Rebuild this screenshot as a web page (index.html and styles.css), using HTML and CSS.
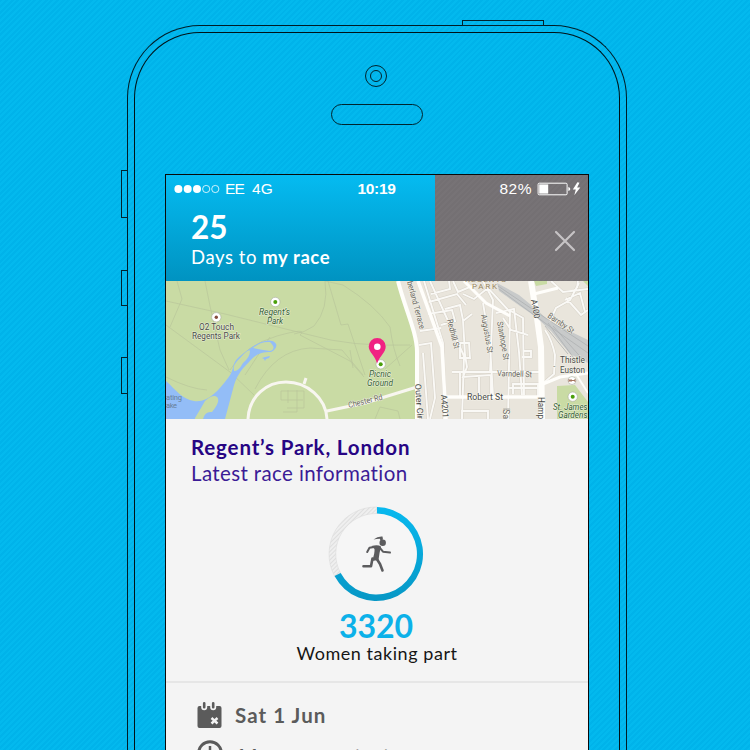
FILE: index.html
```html
<!DOCTYPE html>
<html lang="en">
<head>
<meta charset="utf-8">
<title>Race day</title>
<link rel="stylesheet" href="styles.css">
</head>
<body>
<main class="phone">
  <i class="key key-power"></i><i class="key key-mute"></i><i class="key key-up"></i><i class="key key-down"></i>
  <div class="bezel">
    <div class="camera"><i></i></div>
    <div class="speaker"></div>
    <div class="screen">
      <header class="header">
        <div class="status">
          <div class="carrier">
            <svg class="signal" width="46" height="10" viewBox="0 0 46 10"><g fill="#fff"><circle cx="4.4" cy="5" r="4"/><circle cx="13.7" cy="5" r="4"/><circle cx="23" cy="5" r="4"/></g><g fill="none" stroke="#fff" stroke-width=".8"><circle cx="32.2" cy="5" r="3.6"/><circle cx="41.3" cy="5" r="3.6"/></g></svg>
            <span class="operator">EE</span><span>4G</span>
          </div>
          <div class="time">10:19</div>
          <div class="power"><span>82%</span>
            <svg width="44" height="16" viewBox="0 0 44 16"><rect x="1.1" y="2.2" width="29" height="11.6" rx="1.2" fill="none" stroke="#fff" stroke-width="1"/><path d="M2.2 3.4h9v9.2h-9z" fill="#fff"/><path d="M31.3 5.9q2 .4 2 2.1t-2 2.1z" fill="#fff"/><path d="M40.4 1.3 35.8 8.4h3L37.3 14.3 43.3 6.5h-3.2L42.5 1.8z" fill="#fff"/></svg>
          </div>
        </div>
        <div class="countdown"><strong class="days">25</strong><span class="caption">Days to <b>my race</b></span></div>
        <div class="close"><svg width="22" height="22" viewBox="0 0 22 22"><path d="M2 2 20 20M20 2 2 20" stroke="#c6c3c5" stroke-width="2.2" stroke-linecap="round"/></svg></div>
      </header>

      <svg class="map" viewBox="166 281 422 138">
        <rect x="166" y="281" width="422" height="138" fill="#c9dba4"/>
        <g class="trail">
          <path d="M166 301 225 314 310 335Q350 347 410 345M166 325 230 372 254 395M177 281 182 299 170 327M205 281 210 306 220 350 229 370M230 370Q245 345 277 336T300 335L350 361 364 377M325 281Q329 309 314 326 304 333 294 334M328 281 341 325 348 324 365 375M325 281 343 285Q375 305 390 327 393 350 400 366M412 345 385 369M245 375 270 337M166 377Q190 389 207 390M255 389Q275 350 310 348L342 350 363 375M350 350 353 368M375 419 380 407 398 411 400 419"/>
          <path d="M281 391h23v17h-17M281 391v9h22M288 390v13M297 390v22h-14"/>
        </g>
        <path fill="#93bdf7" d="M166 381C176 390 182 399 194 401 208 403 218 391 228 378 235 370 231 364 239 357 249 349 258 341 269 340.500 279 341 278 349 271 352 261 352 256 354 249 362 240 371 236 377 233 389L225 419H166z"/>
        <g fill="#c9dba4"><path d="M195 418 201 408 205 401Q213 394 217 397 221 401 212 412 205 411 203 419H195z"/><path d="M234 371Q232 365 241 357 249 348 250 351 250 357 243 363 238 372 234 371z"/><path d="M253 348Q261 341 270 342 277 349 270 351 261 350 253 348z"/></g>
        <path fill="#93bdf7" d="m262 358 3-1 5-1-1 2-3 1-1 2-1-2z"/>
        <g fill="none" stroke="#f8f6f0"><path stroke-width="3" d="M248 419C249 396 267 382 286 382 307 382 326 398 327 419M304 384 306 378M327 411 365 403 417 387"/></g>
        <path fill="#e9e5dc" d="M399 281 418 348 418 387 417 419H588V281z"/>
        <path fill="#c9dba4" d="M534 281h13v3l-11 2zM557 386l18-1 13 17v17h-31zM583 281h5v5z"/>
        <g class="street-edge"><path id="streets" d="M424 281 443 343 445 419M430 281 464 356 462 419M431 294 450 289 449 281M429 302 457 294 466 305M428 314 452 310 455 321 441 325M453 281 458 292 477 284M420 331 441 328M419 345 431 343 435 398 430 419M423 353 428 419M463 294 474 299 488 288 510 312 508 419M445 309 460 305 463 320 465 355 467 367 463 377 491 375 491 394M469 343h-9v15h10zM472 314 463 321M483 281 493 300 490 372M493 372H461M483 303 490 345 493 395M496 313 514 309 519 352 522 395M509 310 523 318 524 395M503 318 511 330 528 335M524 351h7v6h-9M492 372H540M540 388H508M513 394V384h25v13M444 397h98M479 397v-21M460 397v-25h-8M462 419v-8h26v8M445 405 444 419M545 330Q552 340 555 355L554 374 541 385M548 325 556 308 570 300 579 283M566 298 581 315 588 310M565 300 580 293 585 312M551 281 563 292 588 289M578 281 577 288"/></g>
        <use href="#streets" class="street"/>
        <g class="road">
          <path d="M398 281C405 309 417 332 417 352L417 419"/><path d="M418 281 442 347 446 419M444 397H543" stroke-width="3.500"/><path d="M531 281 537 318 541 347 542 419" stroke-width="6"/><path d="M464 281 486 303 510 316M543 384 560 377 588 373M534 294 558 288" stroke-width="3"/><path d="M576 374 588 393" stroke-width="2"/>
        </g>
        <path fill="#c8caca" d="M497 283 519 295 536 309 549 321 588 340V363L570 354 551 331 536 317 520 306 499 291z"/>
        <path d="M498 286 541 315 588 346M499 289 545 323 588 353M545 326 568 354M548 323 576 361M553 326 585 362" fill="none" stroke="#aeb1b3" stroke-width=".8"/>

        <g class="place"><circle cx="216.300" cy="317.300" r="4.700"/><circle cx="275.300" cy="302" r="4.700"/><circle cx="380.700" cy="364.300" r="4.700"/><circle cx="572.700" cy="396.700" r="4.700"/><circle cx="572" cy="380.500" r="4"/></g>
        <circle cx="216.300" cy="317.300" r="1.700" fill="#854c3c"/><g fill="#4ba00c"><circle cx="275.300" cy="302" r="2"/><circle cx="380.700" cy="364.300" r="2"/><circle cx="572.700" cy="396.700" r="2"/></g><path d="M569 379v3m2-3v3m4-3v3M569 380.500h6" stroke="#a77660" fill="none"/>
        <g class="label">
          <text x="199" y="330.300" textLength="35" lengthAdjust="spacingAndGlyphs">O2 Touch</text><text x="192" y="339.300" textLength="48" lengthAdjust="spacingAndGlyphs">Regents Park</text>
          <text x="560" y="362.800" textLength="25" lengthAdjust="spacingAndGlyphs">Thistle</text><text x="560" y="372.500" textLength="25" lengthAdjust="spacingAndGlyphs">Euston</text><text x="553" y="369" font-size="4">™</text>
          <text x="467" y="400.300" textLength="36" lengthAdjust="spacingAndGlyphs">Robert St</text>
          <text transform="translate(415 384) rotate(86)" textLength="35" lengthAdjust="spacingAndGlyphs">Outer Cir</text>
          <text transform="translate(441 395) rotate(86)" textLength="23" lengthAdjust="spacingAndGlyphs">A4201</text>
          <text transform="translate(531 300) rotate(80)" textLength="19" lengthAdjust="spacingAndGlyphs">A400</text>
          <text transform="translate(538 397) rotate(90)" textLength="22" lengthAdjust="spacingAndGlyphs">Hamp</text>
        </g>
        <g class="label park"><text x="259" y="315" textLength="31" lengthAdjust="spacingAndGlyphs">Regent’s</text><text x="267" y="324" textLength="16" lengthAdjust="spacingAndGlyphs">Park</text><text x="369" y="377.300" textLength="22" lengthAdjust="spacingAndGlyphs">Picnic</text><text x="367" y="386.300" textLength="26" lengthAdjust="spacingAndGlyphs">Ground</text><text x="553" y="409.500" textLength="34.500" lengthAdjust="spacingAndGlyphs">St. James</text><text x="558" y="418.300" textLength="29.500" lengthAdjust="spacingAndGlyphs">Gardens</text></g>
        <g class="label minor">
          <text transform="translate(349 408) rotate(-14)" textLength="35" lengthAdjust="spacingAndGlyphs">Chester Rd</text>
          <text transform="translate(407 282) rotate(75)" textLength="49" lengthAdjust="spacingAndGlyphs">berland Terrace</text>
          <text transform="translate(447 320) rotate(76)" textLength="30" lengthAdjust="spacingAndGlyphs">Redhill St</text>
          <text transform="translate(481 315) rotate(80)" textLength="39" lengthAdjust="spacingAndGlyphs">Augustus St</text>
          <text transform="translate(497 322) rotate(80)" textLength="39" lengthAdjust="spacingAndGlyphs">Stanhope St</text>
          <text x="497" y="376" transform="rotate(2 497 376)" textLength="35" lengthAdjust="spacingAndGlyphs">Varndell St</text>
          <text transform="translate(547 317) rotate(34)" textLength="30" lengthAdjust="spacingAndGlyphs">Barnby St</text>
          <text transform="translate(503 408) rotate(90)" textLength="11">IS a</text>
          <text x="166" y="400.300" textLength="16" class="water">ating</text><text x="166" y="408.300" textLength="11" class="water">ake</text>
        </g>
        <g class="district"><text x="465" y="281.500" textLength="41">REGENTS</text><text x="472" y="289" textLength="25">PARK</text></g>
        <path d="M377 363.500C375.500 356 368.700 352.500 368.700 346.600A8.500 8.500 0 0 1 385.700 346.600C385.700 352.500 380.500 355 377 363.500z" fill="#f02382"/><circle cx="377.300" cy="346.700" r="3.300" fill="#fff"/>
      </svg>

      <section class="info">
        <h1>Regent’s Park, London</h1>
        <p class="latest">Latest race information</p>
        <div class="entrants">
          <svg class="ring" width="96" height="96" viewBox="0 0 96 96">
            <defs><linearGradient id="ringFill" x1="0" y1="0" x2="0" y2="1"><stop offset="0" stop-color="#08b9ef"/><stop offset="1" stop-color="#0797c5"/></linearGradient>
            <pattern id="hatch" width="3" height="3" patternUnits="userSpaceOnUse" patternTransform="rotate(45)"><path d="M0 0h3v3H0z" fill="#efefef"/><path d="M0 0h1v3H0z" fill="#dedede"/></pattern></defs>
            <circle cx="48" cy="48" r="40.500" fill="#f6f6f6"/>
            <path fill="url(#hatch)" stroke="#dcdcdc" stroke-width=".6" d="M49 1A47 47 0 0 0 6.500 70L12.500 67A40.500 40.500 0 0 1 49 7.500z"/>
            <path fill="url(#ringFill)" d="M49 1A47 47 0 1 1 6.500 70L12.700 67A40.500 40.500 0 1 0 49 7.500z"/>
            <g fill="#5c5c5e"><circle cx="54.700" cy="36.700" r="3.200"/><path d="M45.500 33.500Q50 30 54.500 30.500L55 33.500 52.500 34.500 51.800 32.800Q48.500 32.800 45.500 33.500z"/></g>
            <g fill="none" stroke="#5c5c5e" stroke-linecap="round" stroke-linejoin="round"><path d="M46 41 41.500 41.700 39.200 46M51.500 41.500 55 45.700 62 46.600" stroke-width="2"/><path d="M44.500 52.500 43 60.300H35.500M48.500 52.500 52 58 54.500 64.500" stroke-width="2.600"/></g>
            <path fill="#5c5c5e" d="M43.500 40Q50 38.500 53 40.500 51.500 46 50.500 54L44 55Q47 47 46.500 43z"/>
          </svg>
          <strong class="count">3320</strong>
          <span class="part">Women taking part</span>
        </div>
      </section>
      <ul class="details">
        <li><svg width="26" height="28" viewBox="0 0 26 28"><path fill="#5b5b5b" fill-rule="evenodd" d="M2.500 5H4.200V6.300A3 3 0 0 0 10.200 6.300V5H13.200V6.300A3 3 0 0 0 19.200 6.300V5H22.500Q24.500 5 24.500 7V25Q24.500 27 22.500 27H2.500Q.5 27 .5 25V7Q.5 5 2.500 5z"/><path d="M7.200 2.300V6.300M16.200 2.300V6.300" stroke="#5b5b5b" stroke-width="2.600" stroke-linecap="round"/><path d="m14.500 17 6 5.500m0-5.500-6 5.500" stroke="#f4f4f4" stroke-width="2.400"/></svg><span>Sat 1 Jun</span></li>
        <li><svg width="26" height="28" viewBox="0 0 26 28"><circle cx="13" cy="14" r="11.300" fill="none" stroke="#5b5b5b" stroke-width="3"/><path d="M13 7v8h6" stroke="#5b5b5b" stroke-width="2.500" fill="none"/></svg><span>11am race starts</span></li>
      </ul>
    </div>
  </div>
</main>
</body>
</html>
```
FILE: styles.css
```css
* { box-sizing: border-box; }
html, body { margin: 0; height: 750px; overflow: hidden; }
body {
  font-family: Lato, sans-serif;
  font-variant-ligatures: none;
  background: repeating-linear-gradient(135deg, #00b3ea 0 2px, #03b9ee 2px 4px);
}
.phone {
  position: relative;
  width: 500px;
  height: 725px;
  margin: 25px 0 0 127px;
  padding: 6px 6px 0;
  border: 1px solid #001c26;
  border-bottom: 0;
  border-radius: 73px 73px 0 0;
}
.bezel {
  height: 100%;
  border: 1px solid #001217;
  border-bottom: 0;
  border-radius: 66px 66px 0 0;
  display: flex;
  flex-direction: column;
  align-items: center;
}
.key { position: absolute; border: 1px solid #02232d; }
.key-power { left: 334px; top: -6px; width: 82px; height: 6px; }
.key-mute { left: -7px; top: 144px; width: 7px; height: 48px; }
.key-up { left: -7px; top: 244px; width: 7px; height: 36px; }
.key-down { left: -7px; top: 331px; width: 7px; height: 37px; }
.camera {
  flex: none;
  width: 22px;
  height: 22px;
  margin: 32px 2px 0 0;
  border: 1.300px solid #00242e;
  border-radius: 50%;
  display: grid;
  place-items: center;
}
.camera i { width: 12px; height: 12px; border: 1px solid #00242e; border-radius: 50%; }
.speaker {
  flex: none;
  width: 92px;
  height: 21px;
  margin: 17px 0 0;
  border: 1px solid #00242e;
  border-radius: 11px;
}
.screen {
  flex: 1;
  min-height: 0;
  overflow: hidden;
  width: 424px;
  margin-top: 49px;
  border: 1px solid #0a0a0a;
  border-bottom: 0;
  background: #f4f4f4;
}
.header { position: relative; display: flex; height: 106px; }
.status {
  position: absolute;
  inset: 4px 7px auto 8px;
  height: 19px;
  display: grid;
  grid-template-columns: 1fr auto 1fr;
  align-items: center;
  color: #fff;
  font: 15.500px/19px "Liberation Sans", sans-serif;
}
.carrier, .power { display: flex; align-items: center; }
.operator { margin: 0 8px 0 5px; letter-spacing: -.8px; }
.time { font-weight: bold; letter-spacing: -.3px; margin-right: 2px; }
.power { justify-content: flex-end; gap: 5px; }
.power span { letter-spacing: .5px; }
.countdown {
  width: 269px;
  padding: 34px 0 0 25px;
  display: flex;
  flex-direction: column;
  background: linear-gradient(#05bbf1, #0093c1);
  color: #fff;
}
.days { font-size: 31.500px; line-height: 36px; }
.caption { font-size: 18.500px; line-height: 24px; letter-spacing: .57px; }
.close {
  flex: 1;
  display: flex;
  justify-content: flex-end;
  padding: 55px 12px 0 0;
  background: repeating-linear-gradient(135deg, #747073 0 2px, #777376 2px 4px);
}
.map { display: block; width: 422px; height: 138px; font-family: Roboto, sans-serif; }
.trail { fill: none; stroke: #b9c69b; stroke-width: .7; }
.street-edge { fill: none; stroke: #d8d3c9; stroke-width: 3; }
.street { fill: none; stroke: #faf9f6; stroke-width: 1.900; }
.road { fill: none; stroke: #fffefb; stroke-width: 4; }
.place { fill: #fff; stroke: #a7ad9d; stroke-width: .6; }
.label { fill: #494b49; font-size: 8.600px; paint-order: stroke; stroke: rgba(250, 249, 240, .65); stroke-width: 1.200px; }
.park { fill: #355f35; font-style: italic; }
.minor { fill: #69675f; font-size: 8.300px; }
.water { fill: #68809a; font-size: 7.500px; stroke: none; }
.district { fill: #9b8760; font-size: 8px; }
.info { height: 264px; padding: 15px 25px 0; border-bottom: 2px solid #e6e6e6; }
h1 { margin: 0; color: #270584; font-size: 20.500px; line-height: 26px; font-weight: 700; letter-spacing: .84px; }
.latest { margin: 0; color: #3b1b96; font-size: 20.500px; line-height: 27px; letter-spacing: .38px; }
.entrants { display: flex; flex-direction: column; align-items: center; }
.ring { margin: 19px 2px 0 0; }
.count { color: #0cb1e9; font-size: 32px; line-height: 40px; margin: 4px 2px 0 0; }
.part { color: #161616; font-size: 18px; line-height: 22px; letter-spacing: .55px; margin-top: -4px; }
.details { list-style: none; margin: 0; padding: 13px 31px; }
.details li { display: flex; align-items: center; gap: 12px; height: 37px; color: #5b5b5b; font-size: 20.500px; font-weight: 700; letter-spacing: 1.050px; }
.details li + li { height: 40px; }
.details li + li span { padding-top: 6px; letter-spacing: .9px; }
```
